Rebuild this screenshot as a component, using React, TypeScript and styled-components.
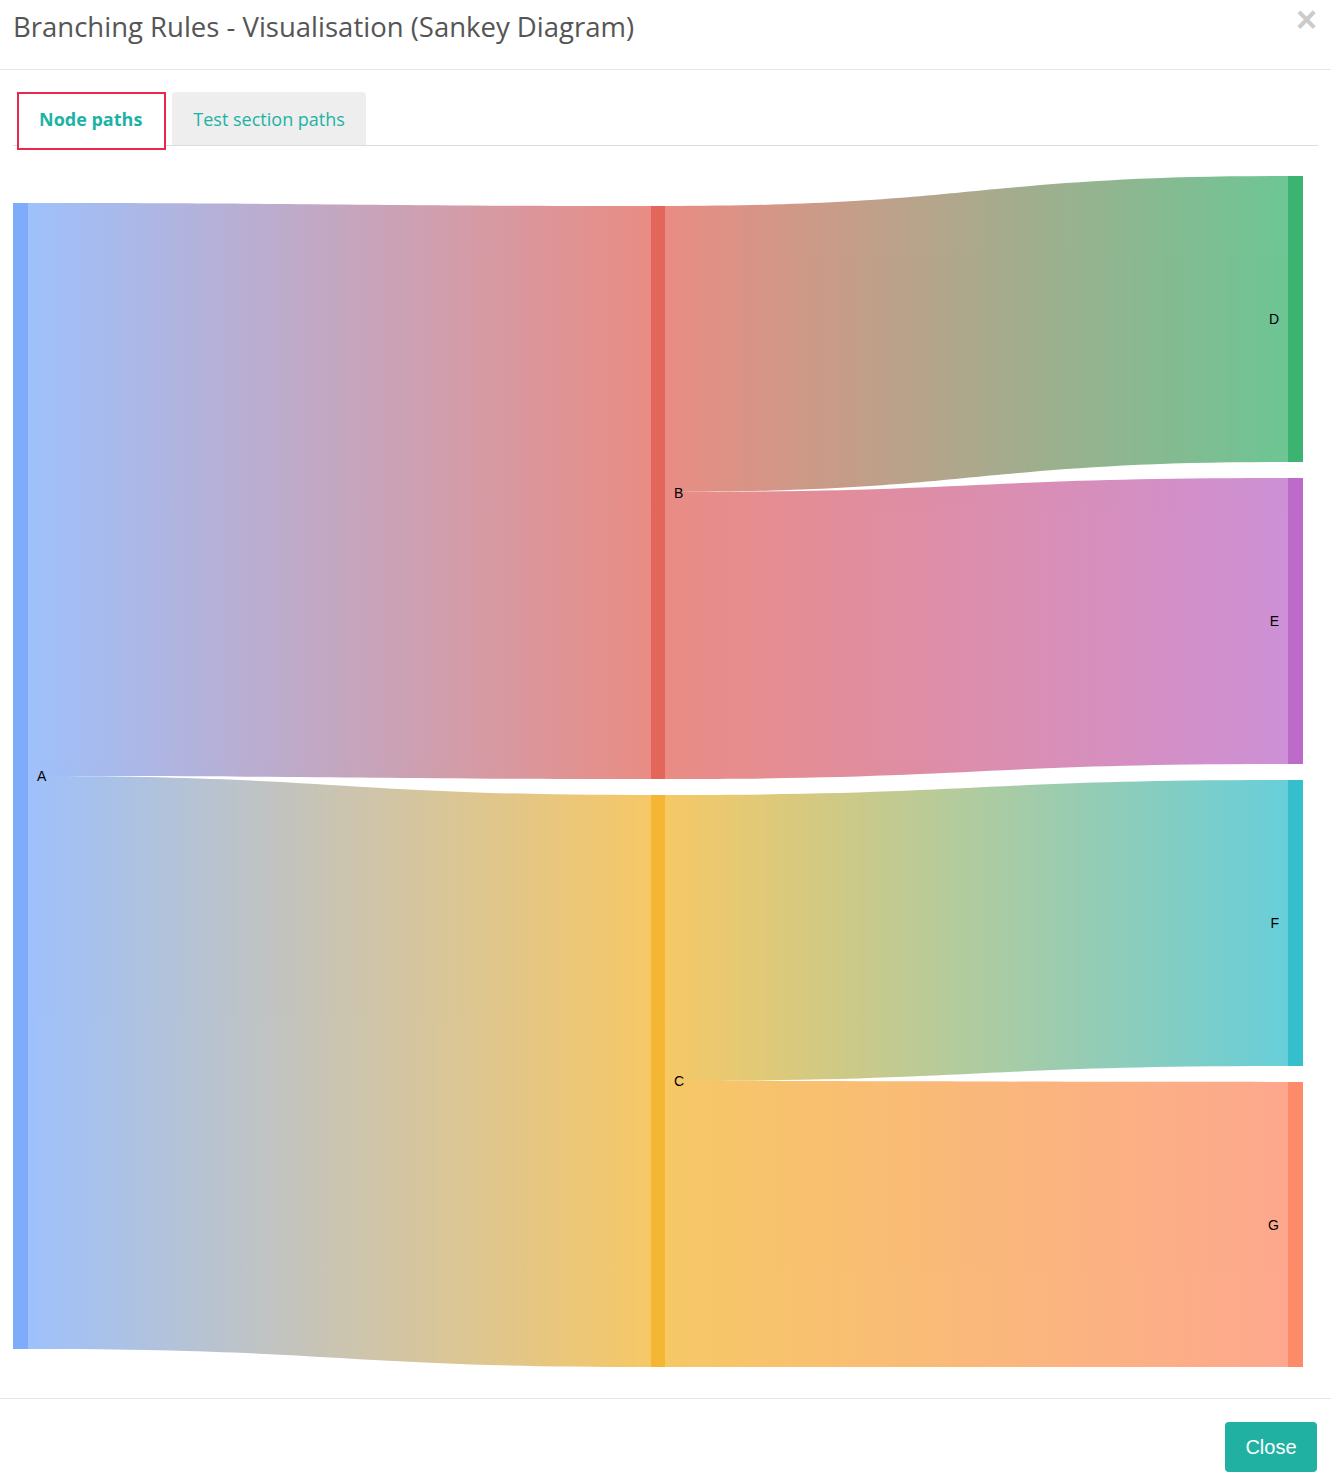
import React from "react";
import styled, { createGlobalStyle } from "styled-components";

const Global = createGlobalStyle`
  html, body { margin: 0; padding: 0; background: #fff; }
  body { font-family: "Open Sans", "Liberation Sans", sans-serif; }
  * { box-sizing: border-box; }
`;

const Modal = styled.div`
  width: 1331px;
  height: 1480px;
  display: flex;
  flex-direction: column;
  background: #fff;
`;

const Header = styled.div`
  height: 70px;
  padding: 9px 13px 0 13px;
  border-bottom: 1px solid #e5e5e5;
  display: flex;
  justify-content: space-between;
  align-items: flex-start;
`;

const Title = styled.h4`
  margin: 0;
  font-family: "Open Sans", sans-serif;
  font-weight: 400;
  font-size: 27.5px;
  line-height: 36px;
  color: #555;
`;

const CloseX = styled.button`
  border: none;
  background: none;
  padding: 0;
  margin: -7px 1px 0 0;
  font-family: "Liberation Sans", Arial, sans-serif;
  font-size: 36px;
  font-weight: 700;
  line-height: 36px;
  height: 36px;
  color: #000;
  opacity: 0.2;
  cursor: pointer;
`;

const Body = styled.div`
  flex: 1;
  display: flex;
  flex-direction: column;
  padding-top: 22px;
`;

const Nav = styled.div`
  margin: 0 13px;
  height: 54px;
  border-bottom: 1px solid #ddd;
  display: flex;
  align-items: flex-start;
  gap: 6px;
`;

const Tab = styled.div<{ $active?: boolean }>`
  position: relative;
  z-index: 1;
  font-family: "Open Sans", sans-serif;
  font-size: 18px;
  color: #1cb3a6;
  display: flex;
  align-items: center;
  white-space: nowrap;
  ${(p) =>
    p.$active
      ? `
    margin-left: 4px;
    height: 58px;
    padding: 0 22px 4px 20px;
    font-weight: 700;
    background: #fff;
    border: 2px solid #e8294a;
  `
      : `
    height: 53px;
    padding: 0 21px;
    background: #eee;
    border-radius: 4px 4px 0 0;
  `}
`;

const ChartWrap = styled.div`
  height: 1252px;
`;

const Footer = styled.div`
  border-top: 1px solid #e5e5e5;
  display: flex;
  justify-content: flex-end;
  padding: 23px 14px 8px 0;
`;

const Button = styled.button`
  width: 92px;
  height: 50px;
  border: none;
  border-radius: 4px;
  background: #20b1a2;
  color: #fff;
  font-family: "Liberation Sans", Arial, sans-serif;
  font-size: 20px;
  cursor: pointer;
`;

type Node = { id: string; x0: number; x1: number; y0: number; y1: number; color: string; labelLeft?: boolean };

const nodes: Record<string, Node> = {
  A: { id: "A", x0: 13, x1: 28, y0: 203, y1: 1349, color: "#7eacfb" },
  B: { id: "B", x0: 651, x1: 665, y0: 206, y1: 779, color: "#e3665b" },
  C: { id: "C", x0: 651, x1: 665, y0: 795, y1: 1367, color: "#f4b633" },
  D: { id: "D", x0: 1288, x1: 1303, y0: 176, y1: 462, color: "#3cb371", labelLeft: true },
  E: { id: "E", x0: 1288, x1: 1303, y0: 478, y1: 764, color: "#bd6bc9", labelLeft: true },
  F: { id: "F", x0: 1288, x1: 1303, y0: 780, y1: 1066, color: "#35bfcd", labelLeft: true },
  G: { id: "G", x0: 1288, x1: 1303, y0: 1082, y1: 1367, color: "#fd8b69", labelLeft: true },
};

const links = [
  { s: "A", t: "B", sy0: 203, sy1: 776, ty0: 206, ty1: 779 },
  { s: "A", t: "C", sy0: 776, sy1: 1349, ty0: 795, ty1: 1367 },
  { s: "B", t: "D", sy0: 206, sy1: 492, ty0: 176, ty1: 462 },
  { s: "B", t: "E", sy0: 492, sy1: 779, ty0: 478, ty1: 764 },
  { s: "C", t: "F", sy0: 795, sy1: 1081, ty0: 780, ty1: 1066 },
  { s: "C", t: "G", sy0: 1081, sy1: 1367, ty0: 1082, ty1: 1367 },
];

const TOP = 146;

function bandPath(x0: number, x1: number, sy0: number, sy1: number, ty0: number, ty1: number) {
  const xm = (x0 + x1) / 2;
  return `M${x0},${sy0} C${xm},${sy0} ${xm},${ty0} ${x1},${ty0} L${x1},${ty1} C${xm},${ty1} ${xm},${sy1} ${x0},${sy1} Z`;
}

const Sankey: React.FC = () => (
  <svg width={1331} height={1252} viewBox={`0 ${TOP} 1331 1252`}>
    <defs>
      {links.map((l, i) => {
        const s = nodes[l.s];
        const t = nodes[l.t];
        return (
          <linearGradient key={i} id={`g${i}`} gradientUnits="userSpaceOnUse" x1={s.x1} x2={t.x0} y1={0} y2={0}>
            <stop offset="0%" stopColor={s.color} />
            <stop offset="100%" stopColor={t.color} />
          </linearGradient>
        );
      })}
    </defs>
    <g opacity={0.75}>
      {links.map((l, i) => {
        const s = nodes[l.s];
        const t = nodes[l.t];
        return <path key={i} d={bandPath(s.x1, t.x0, l.sy0, l.sy1, l.ty0, l.ty1)} fill={`url(#g${i})`} />;
      })}
    </g>
    {Object.values(nodes).map((n) => (
      <g key={n.id}>
        <rect x={n.x0} y={n.y0} width={n.x1 - n.x0} height={n.y1 - n.y0} fill={n.color} />
        <text
          x={n.labelLeft ? n.x0 - 9 : n.x1 + 9}
          y={(n.y0 + n.y1) / 2}
          dy="0.38em"
          textAnchor={n.labelLeft ? "end" : "start"}
          fontFamily="'Liberation Sans', Arial, sans-serif"
          fontSize={14}
          fill="#000"
        >
          {n.id}
        </text>
      </g>
    ))}
  </svg>
);

export default function App() {
  return (
    <>
      <Global />
      <Modal>
        <Header>
          <Title>Branching Rules - Visualisation (Sankey Diagram)</Title>
          <CloseX aria-label="Close">×</CloseX>
        </Header>
        <Body>
          <Nav>
            <Tab $active>Node paths</Tab>
            <Tab>Test section paths</Tab>
          </Nav>
          <ChartWrap>
            <Sankey />
          </ChartWrap>
        </Body>
        <Footer>
          <Button>Close</Button>
        </Footer>
      </Modal>
    </>
  );
}
